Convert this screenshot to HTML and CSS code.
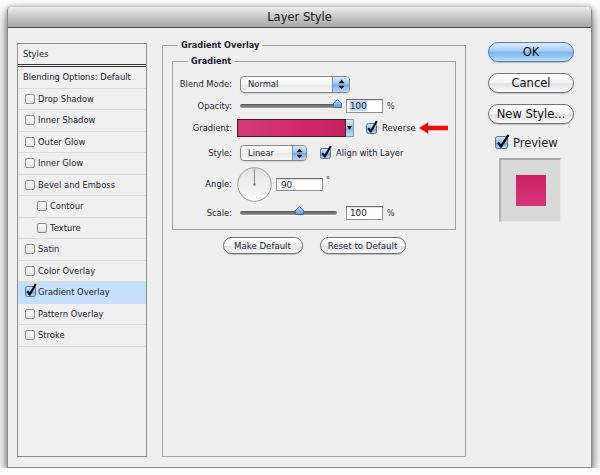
FILE: index.html
```html
<!DOCTYPE html>
<html lang="en">
<head>
    <meta charset="UTF-8">
    <title>Layer Style</title>
    <link rel="stylesheet" href="styles.css">
</head>
<body>
    <svg class="defs" width="0" height="0">
        <defs>
            <linearGradient id="aqua" x1="0" y1="0" x2="0" y2="1">
                <stop offset="0" stop-color="#dcecfc"/>
                <stop offset="0.5" stop-color="#8fbdef"/>
                <stop offset="0.55" stop-color="#6fa6e6"/>
                <stop offset="1" stop-color="#bcdcfa"/>
            </linearGradient>
            <linearGradient id="knob" x1="0" y1="0" x2="0" y2="1">
                <stop offset="0" stop-color="#c4dcf8"/>
                <stop offset="1" stop-color="#5f97de"/>
            </linearGradient>
            <linearGradient id="dial" x1="0" y1="0" x2="0" y2="1">
                <stop offset="0" stop-color="#e2e2e2"/>
                <stop offset="1" stop-color="#fbfbfb"/>
            </linearGradient>
        </defs>
    </svg>

    <div class="window">
        <div class="titlebar">Layer Style</div>
        <div class="dialog">

            <div class="styles-list">
                <div class="list-head">Styles</div>
                <div class="list-item blend">Blending Options: Default</div>
                <div class="list-item"><span class="cb"></span>Drop Shadow</div>
                <div class="list-item"><span class="cb"></span>Inner Shadow</div>
                <div class="list-item"><span class="cb"></span>Outer Glow</div>
                <div class="list-item"><span class="cb"></span>Inner Glow</div>
                <div class="list-item"><span class="cb"></span>Bevel and Emboss</div>
                <div class="list-item sub"><span class="cb"></span>Contour</div>
                <div class="list-item sub"><span class="cb"></span>Texture</div>
                <div class="list-item"><span class="cb"></span>Satin</div>
                <div class="list-item"><span class="cb"></span>Color Overlay</div>
                <div class="list-item active">
                    <svg class="cb-on" width="12" height="14" viewBox="0 0 12 14">
                        <rect x="0.5" y="3.5" width="10" height="10" rx="2" fill="url(#aqua)" stroke="#4d72a8"/>
                        <path d="M2.3 8.2 L4.8 11.6 L10.8 1" fill="none" stroke="#000" stroke-width="2" stroke-linejoin="round"/>
                    </svg>Gradient Overlay
                </div>
                <div class="list-item"><span class="cb"></span>Pattern Overlay</div>
                <div class="list-item"><span class="cb"></span>Stroke</div>
            </div>

            <fieldset class="group outer">
                <legend>Gradient Overlay</legend>
                <fieldset class="group inner">
                    <legend>Gradient</legend>

                    <div class="row">
                        <label>Blend Mode:</label>
                        <div class="select blend-select">
                            <span class="select-text">Normal</span>
                            <span class="stepper">
                                <svg width="7" height="11" viewBox="0 0 7 11"><path d="M3.5 0.5 L6.5 4.2 H0.5 Z M3.5 10.5 L6.5 6.8 H0.5 Z" fill="#111"/></svg>
                            </span>
                        </div>
                    </div>

                    <div class="row gap4">
                        <label>Opacity:</label>
                        <div class="slider">
                            <svg class="thumb" style="left: 93px" width="9" height="9" viewBox="0 0 9 9"><path d="M0.5 8.5 V4.2 L4.5 0.6 L8.5 4.2 V8.5 Z" fill="url(#knob)" stroke="#3e69a8" stroke-linejoin="round"/></svg>
                        </div>
                        <div class="field"><span class="selected">100</span></div>
                        <span class="unit">%</span>
                    </div>

                    <div class="row gap4">
                        <label class="tight">Gradient:</label>
                        <div class="swatch-picker">
                            <div class="swatch"></div>
                            <span class="drop">
                                <svg width="5" height="4" viewBox="0 0 5 4"><path d="M0 0 H5 L2.5 4 Z" fill="#111"/></svg>
                            </span>
                        </div>
                        <svg class="check reverse-check" width="12" height="14" viewBox="0 0 12 14">
                            <rect x="0.5" y="3.5" width="10" height="10" rx="2" fill="url(#aqua)" stroke="#4d72a8"/>
                            <path d="M2.3 8.2 L4.8 11.6 L10.8 1" fill="none" stroke="#000" stroke-width="2" stroke-linejoin="round"/>
                        </svg>
                        <span class="check-label">Reverse</span>
                        <svg class="pointer" width="38" height="16" viewBox="0 0 38 16"><path d="M0 8 L12 0.5 V5 H38 V11 H12 V15.5 Z" fill="#f20d0d"/></svg>
                    </div>

                    <div class="row gap7">
                        <label>Style:</label>
                        <div class="select style-select">
                            <span class="select-text">Linear</span>
                            <span class="stepper">
                                <svg width="7" height="11" viewBox="0 0 7 11"><path d="M3.5 0.5 L6.5 4.2 H0.5 Z M3.5 10.5 L6.5 6.8 H0.5 Z" fill="#111"/></svg>
                            </span>
                        </div>
                        <svg class="check align-check" width="12" height="14" viewBox="0 0 12 14">
                            <rect x="0.5" y="3.5" width="10" height="10" rx="2" fill="url(#aqua)" stroke="#4d72a8"/>
                            <path d="M2.3 8.2 L4.8 11.6 L10.8 1" fill="none" stroke="#000" stroke-width="2" stroke-linejoin="round"/>
                        </svg>
                        <span class="check-label">Align with Layer</span>
                    </div>

                    <div class="row angle-row">
                        <label class="tight">Angle:</label>
                        <svg class="dial" width="35" height="35" viewBox="0 0 35 35">
                            <circle cx="17.5" cy="17.5" r="16.8" fill="url(#dial)" stroke="#9b9b9b"/>
                            <line x1="17.5" y1="17.5" x2="17.5" y2="1.5" stroke="#8a8a8a" stroke-width="1"/>
                            <circle cx="17.5" cy="17.5" r="1.2" fill="#7a7a7a"/>
                        </svg>
                        <div class="field angle-field">90</div>
                        <span class="degree">°</span>
                    </div>

                    <div class="row gap3">
                        <label>Scale:</label>
                        <div class="slider">
                            <svg class="thumb" style="left: 55px" width="9" height="9" viewBox="0 0 9 9"><path d="M0.5 8.5 V4.2 L4.5 0.6 L8.5 4.2 V8.5 Z" fill="url(#knob)" stroke="#3e69a8" stroke-linejoin="round"/></svg>
                        </div>
                        <div class="field">100</div>
                        <span class="unit">%</span>
                    </div>
                </fieldset>

                <div class="defaults">
                    <button class="push make">Make Default</button>
                    <button class="push reset">Reset to Default</button>
                </div>
            </fieldset>

            <div class="actions">
                <button class="btn primary">OK</button>
                <button class="btn">Cancel</button>
                <button class="btn">New Style...</button>
                <div class="preview-check">
                    <svg width="15" height="15" viewBox="0 0 15 15">
                        <rect x="0.5" y="2.5" width="12" height="12" rx="2" fill="url(#aqua)" stroke="#4d72a8"/>
                        <path d="M3 8.5 L6 12.5 L13.5 0.8" fill="none" stroke="#000" stroke-width="2.3" stroke-linejoin="round"/>
                    </svg>
                    <span>Preview</span>
                </div>
                <div class="preview-box">
                    <div class="preview-swatch"></div>
                </div>
            </div>

        </div>
    </div>
</body>
</html>
```

FILE: styles.css
```css
* {
    box-sizing: border-box;
}
body {
    margin: 0;
    background: #fdfdfd;
    font-family: "DejaVu Sans", sans-serif;
    font-size: 8.4px;
    color: #1c1c2e;
}
.defs {
    position: absolute;
}
.window {
    width: 585px;
    height: 461px;
    margin: 7px 0 0 7px;
    background: #efefef;
    border: 1px solid #8c8c8c;
    border-top: 0;
    border-radius: 4px 4px 0 0;
    box-shadow: 0 6px 14px rgba(0, 0, 0, 0.55), 0 0 5px rgba(0, 0, 0, 0.3);
    overflow: hidden;
}
.titlebar {
    height: 21px;
    background: linear-gradient(#ededed, #c4c4c4 55%, #a7a7a7);
    border-bottom: 1px solid #4a4a4a;
    text-align: center;
    font-size: 11.5px;
    line-height: 20px;
    color: #161616;
}
.dialog {
    display: flex;
    align-items: flex-start;
    padding: 15px 0 0 9px;
}

/* left list */
.styles-list {
    flex: none;
    width: 130px;
    height: 414px;
    border: 1px solid #8e8e8e;
    background: #f0f0f0;
}
.list-head {
    height: 23px;
    padding-left: 5px;
    line-height: 20px;
    border-bottom: 3px double #333;
}
.list-item {
    display: flex;
    align-items: center;
    height: 21.5px;
    padding-left: 7px;
    border-bottom: 1px solid #dcdcdc;
}
.list-item.blend {
    padding-left: 5px;
}
.list-item.sub {
    padding-left: 19px;
}
.list-item.active {
    background: #c6dffa;
    border-bottom-color: #c6dffa;
}
.cb {
    width: 10px;
    height: 10px;
    margin-right: 3px;
    border: 1px solid #8d8d8d;
    border-radius: 2px;
    background: linear-gradient(#fdfdfd, #e4e4e4);
}
.cb-on {
    margin: -4px 1px 0 0;
}

/* group boxes */
.group {
    margin: 0;
    border: 1px solid #a2a2a2;
    min-inline-size: 0;
}
.group legend {
    padding: 0 3px;
    font-weight: bold;
    font-size: 8.2px;
    line-height: 10px;
}
.outer {
    flex: none;
    width: 304px;
    margin: -3px 0 0 15px;
    padding: 6px 9px 202px 9px;
}
.outer > legend {
    margin-left: 6px;
}
.inner {
    padding: 9px 7px 7px 7px;
}
.inner > legend {
    margin-left: 8px;
}
.row {
    display: flex;
    align-items: center;
    height: 18px;
}
.row label {
    flex: none;
    display: flex;
    justify-content: flex-end;
    width: 52px;
    margin-right: 8px;
    white-space: nowrap;
}
.row label.tight {
    margin-right: 5px;
}
.gap3 {
    margin-top: 3px;
}
.gap4 {
    margin-top: 4px;
}
.gap7 {
    margin-top: 7px;
}
.angle-row {
    height: 34px;
    margin-top: 5px;
}

.select {
    display: flex;
    border: 1px solid #878787;
    border-radius: 4px;
    background: linear-gradient(#ffffff, #f3f3f3 50%, #e7e7e7 52%, #f8f8f8);
    box-shadow: 0 1px 1px rgba(0, 0, 0, 0.12);
    overflow: hidden;
}
.blend-select {
    width: 110px;
    height: 17px;
}
.style-select {
    width: 67px;
    height: 16px;
}
.select-text {
    flex: 1;
    padding-left: 7px;
    line-height: 15px;
}
.stepper {
    display: flex;
    align-items: center;
    justify-content: center;
    width: 17px;
    border-left: 1px solid #6f93c6;
    background: linear-gradient(#d9eafc, #98c3f0 48%, #74aaea 52%, #b9dafa);
}
.style-select .stepper {
    width: 14px;
}

.slider {
    position: relative;
    width: 97px;
    height: 4px;
    border-radius: 2px;
    background: linear-gradient(#555, #9a9a9a);
    box-shadow: 0 1px 0 #fff;
}
.thumb {
    position: absolute;
    top: -5px;
}
.field {
    width: 37px;
    height: 14px;
    margin-left: 9px;
    padding-left: 3px;
    border: 1px solid #8f8f8f;
    border-top-color: #6c6c6c;
    background: #fff;
    box-shadow: inset 0 1px 1px rgba(0, 0, 0, 0.12);
    font-size: 8.8px;
    line-height: 12px;
}
.selected {
    background: #b9d5f7;
}
.unit {
    margin-left: 4px;
    font-size: 8px;
    color: #333;
}

.swatch-picker {
    display: flex;
    height: 18px;
}
.swatch {
    width: 109px;
    border: 1px solid #2b2b2b;
    background: linear-gradient(90deg, #d23a7a, #cf2c6c 50%, #c9215e);
}
.drop {
    display: flex;
    align-items: center;
    justify-content: center;
    width: 8px;
    border: 1px solid #7e98bd;
    border-left: 0;
    background: linear-gradient(#dbe9f8, #9fc2ea 50%, #8cb6e6 52%, #c3dcf6);
}
.check {
    flex: none;
    margin-top: -3px;
}
.reverse-check {
    margin-left: 12px;
}
.align-check {
    margin-left: 13px;
}
.check-label {
    margin-left: 4px;
}
.pointer {
    margin-left: 3px;
}

.dial {
    flex: none;
}
.angle-field {
    width: 47px;
    height: 13px;
    margin-left: 4px;
    margin-top: 1px;
    padding-left: 4px;
}
.degree {
    align-self: flex-start;
    margin: 9px 0 0 3px;
    font-size: 8px;
}

.defaults {
    display: flex;
    justify-content: center;
    gap: 17px;
    margin-top: 7px;
}
.push {
    height: 17px;
    padding: 0;
    border: 1px solid #6e6e6e;
    border-radius: 9px;
    background: linear-gradient(#ffffff, #f4f4f4 50%, #e4e4e4 52%, #f7f7f7);
    box-shadow: 0 1px 1px rgba(0, 0, 0, 0.2);
    font-family: "DejaVu Sans", sans-serif;
    font-size: 8.6px;
    color: #1c1c2e;
}
.push.make {
    width: 80px;
}
.push.reset {
    width: 86px;
}

/* right column */
.actions {
    flex: none;
    display: flex;
    flex-direction: column;
    width: 86px;
    margin: -1px 0 0 22px;
}
.btn {
    height: 20px;
    padding: 0;
    border: 1px solid #737373;
    border-radius: 10px;
    background: linear-gradient(#ffffff, #f4f4f4 50%, #e3e3e3 52%, #f8f8f8);
    box-shadow: 0 1px 1px rgba(0, 0, 0, 0.2);
    font-family: "DejaVu Sans", sans-serif;
    font-size: 11.5px;
    color: #111;
}
.btn + .btn {
    margin-top: 11px;
}
.btn.primary {
    border-color: #4d7cbf;
    background: linear-gradient(#dbecfd, #a6ccf4 45%, #7db3ee 52%, #a3cff8 85%, #cbe6fd);
}
.preview-check {
    display: flex;
    align-items: center;
    margin: 12px 0 0 7px;
    font-size: 11.5px;
}
.preview-check svg {
    margin: -3px 3px 0 0;
}
.preview-box {
    display: flex;
    align-items: center;
    justify-content: center;
    width: 62px;
    height: 64px;
    margin: 8px 0 0 11px;
    border-top: 2px solid #a9a9a9;
    border-left: 2px solid #b2b2b2;
    border-right: 1px solid #e9e9e9;
    border-bottom: 1px solid #e9e9e9;
    background: #d9d9d9;
}
.preview-swatch {
    width: 30px;
    height: 31px;
    background: linear-gradient(#cd2164, #d4357a);
}
```
